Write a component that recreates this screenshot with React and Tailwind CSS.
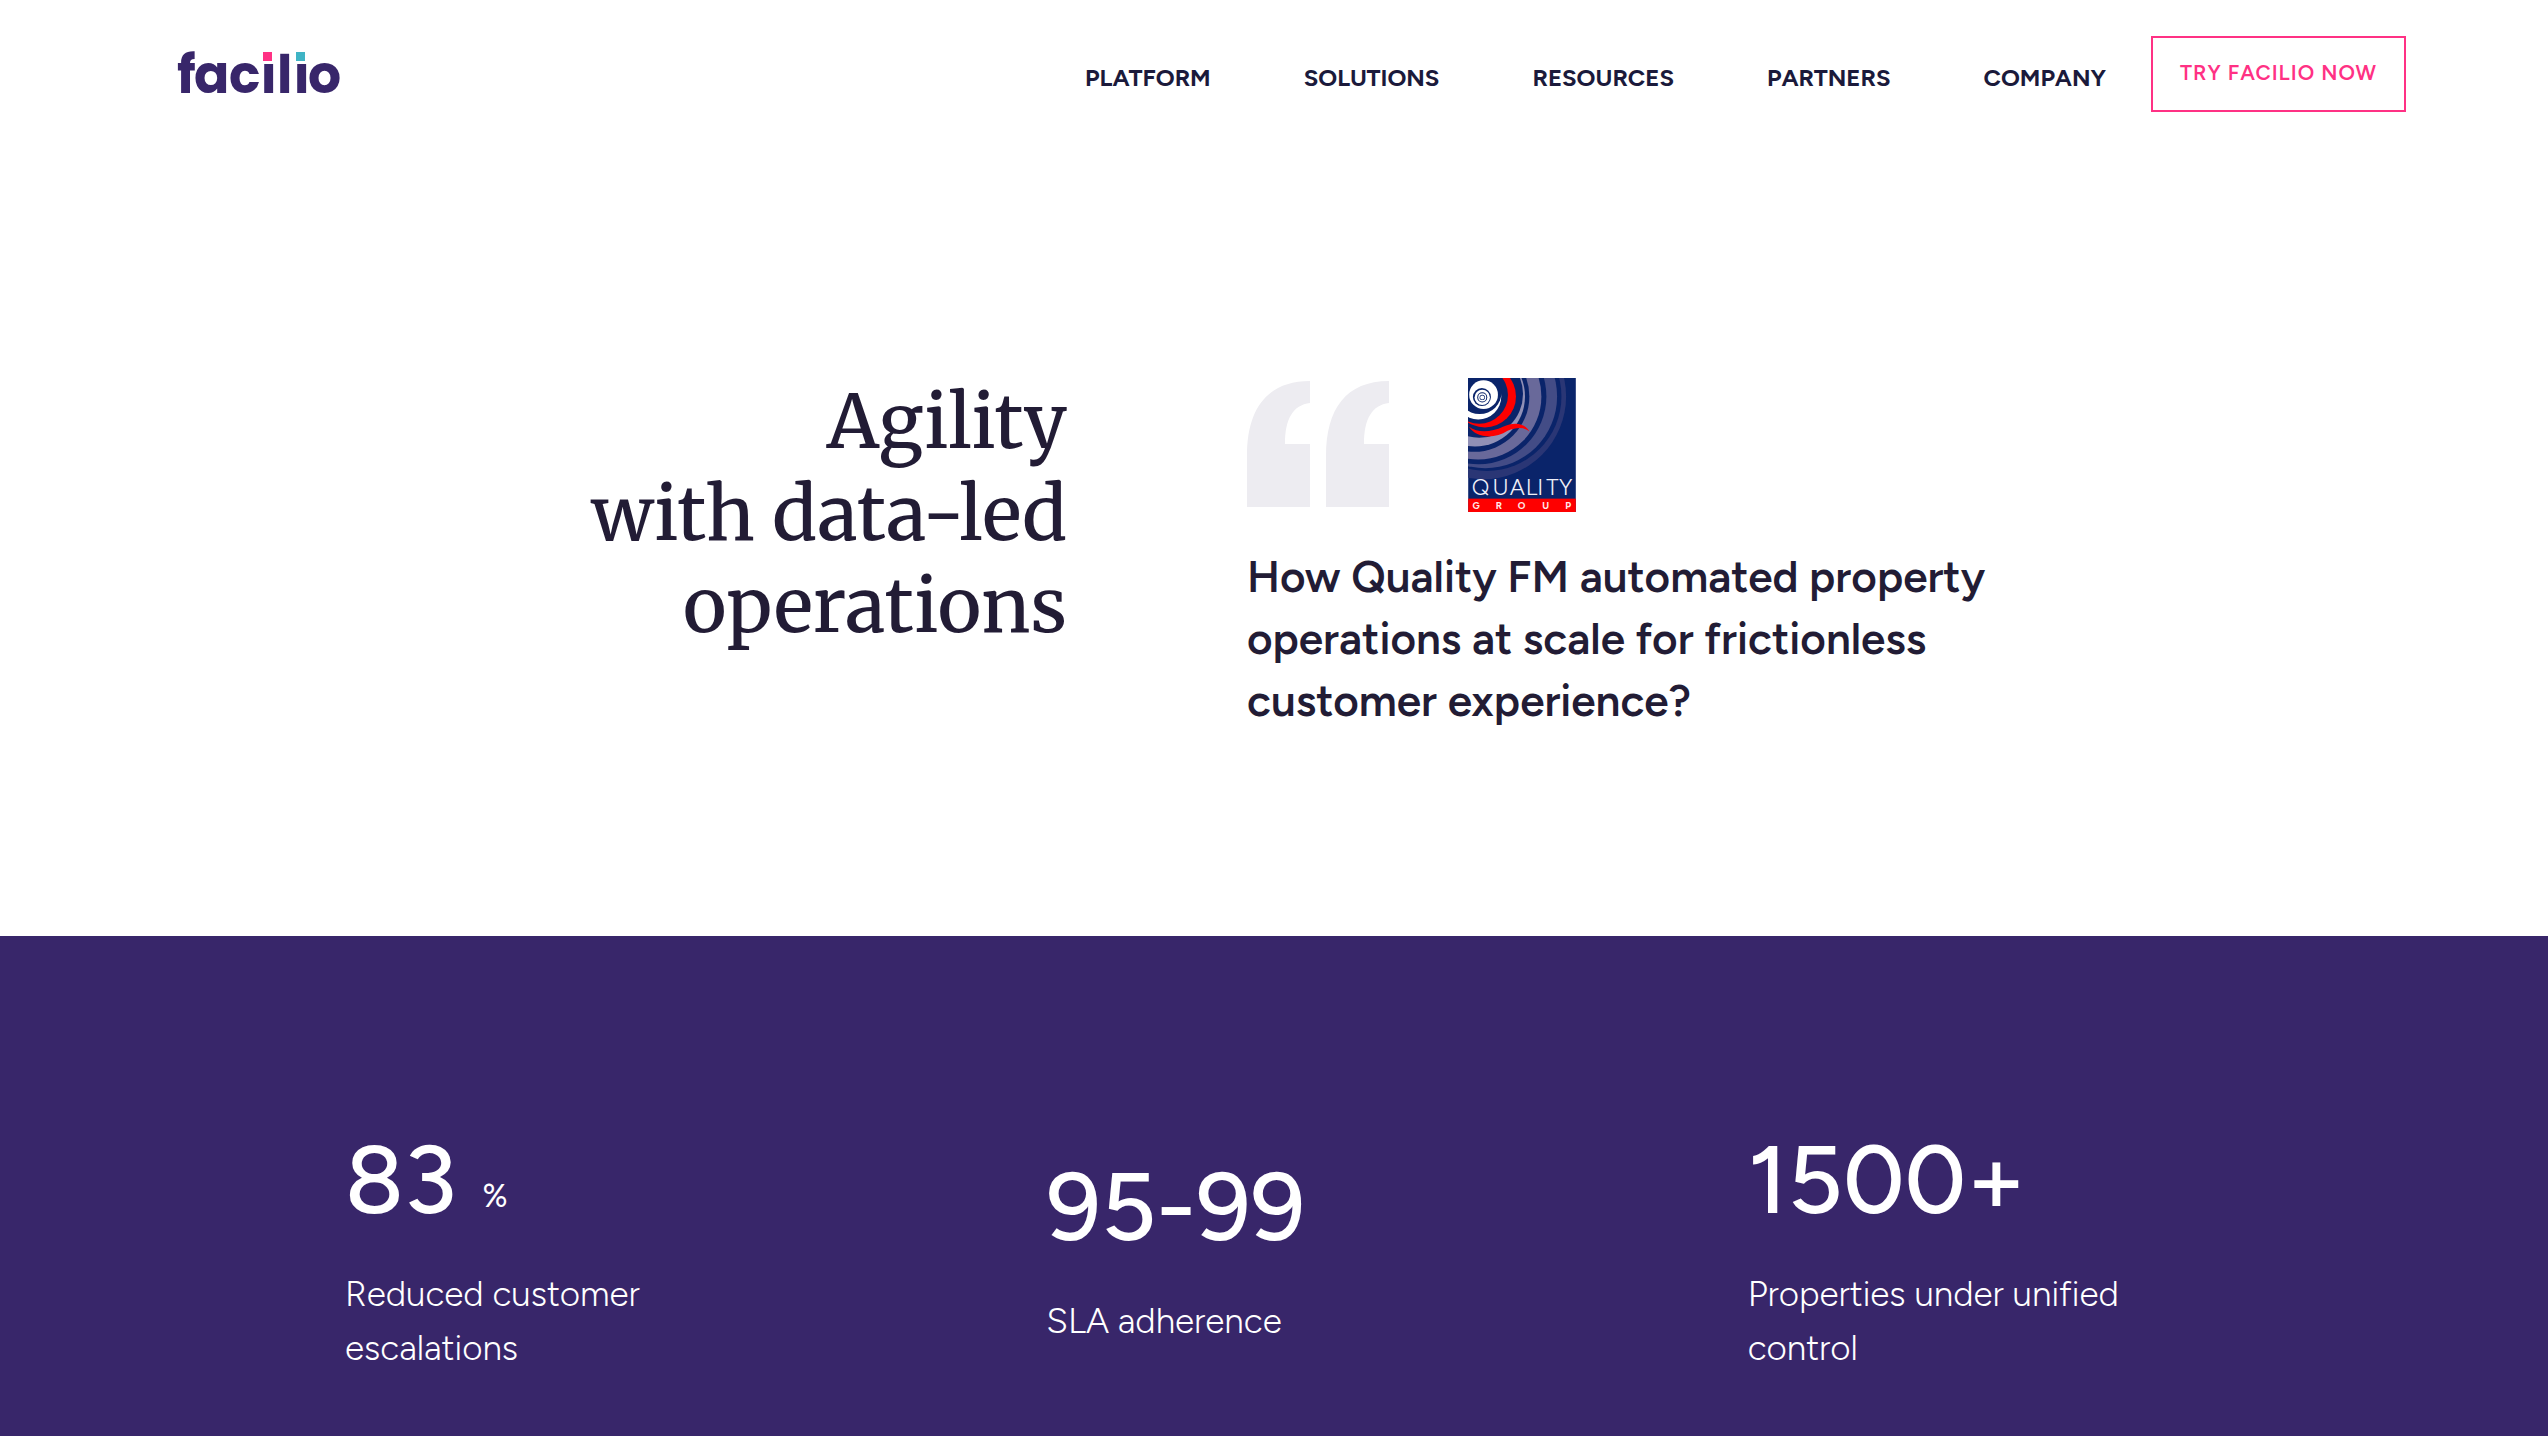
import React from "react";

const NAV = ["PLATFORM", "SOLUTIONS", "RESOURCES", "PARTNERS", "COMPANY"];

const STATS = [
  { value: "83", unit: "%", label: "Reduced customer escalations" },
  { value: "95-99", label: "SLA adherence" },
  { value: "1500+", label: "Properties under unified control" },
];

const NAVY = "#0a246a";

// Nested discs, largest first: each tinted disc is cut by a navy one to leave a crescent.
const DISCS = [
  [45, 55, 248, "#2a3675"],
  [56, 55, 223, NAVY],
  [51, 55, 215, "#434c86"],
  [31, 55, 203, NAVY],
  [30, 55, 189, "#69699a"],
  [17, 55, 166, NAVY],
  [20, 55, 150, "#9190b6"],
  [33, 48, 131, NAVY],
  [50, 55, 93, "#fe0000"],
  [33, 51, 86, NAVY],
  [30, 55, 69, "#ffffff"],
  [34, 42, 66, NAVY],
  [46, 50, 43, "#ffffff"],
  [41, 57, 27, NAVY],
  [42, 58, 23, "#ffffff"],
  [42, 58, 15, NAVY],
  [42, 58, 12, "#ffffff"],
  [42, 58, 8, NAVY],
  [42, 58, 6, "#ffffff"],
];

function FacilioLogo() {
  return (
    <svg
      viewBox="0 0 166 48"
      className="h-12 w-[166px] overflow-visible"
      role="img"
      aria-label="facilio"
    >
      <text
        x="0 17 52 84 100 117 131"
        y="43"
        fill="#38266a"
        fontSize="52"
        fontWeight="700"
        fontFamily="Poppins, Montserrat, Lato, sans-serif"
      >
        facilio
      </text>
      <rect x="84" y="0" width="13" height="14" fill="#fff" />
      <rect x="117" y="0" width="13" height="14" fill="#fff" />
      <rect x="86" y="2" width="9" height="9" fill="#ff3184" />
      <rect x="119" y="2" width="9" height="9" fill="#3fb4c5" />
    </svg>
  );
}

function QuoteMark() {
  const mark = "M63 0V22C46 24 38 38 38 63H63V126H0V75C0 28 20 0 63 0Z";
  return (
    <svg
      viewBox="0 0 142 126"
      className="mt-[3px] h-[126px] w-[142px]"
      fill="#edecf1"
      aria-hidden="true"
    >
      <path d={mark} />
      <path d={mark} transform="translate(79 0)" />
    </svg>
  );
}

function QualityLogo() {
  return (
    <svg viewBox="0 0 322 401" className="h-[134px] w-[108px]" role="img" aria-label="Quality Group">
      <rect width="322" height="401" fill={NAVY} />
      {DISCS.map(([cx, cy, r, fill], i) => (
        <circle key={i} cx={cx} cy={cy} r={r} fill={fill} />
      ))}
      <path
        d="M2 146C30 166 70 162 104 146C140 130 170 136 183 160C166 146 144 148 118 158C80 182 26 182 2 146Z"
        fill="#fe0000"
      />
      <g fontFamily="Figtree, Lato, sans-serif" textAnchor="middle">
        <text x="37 97 147 190 216 252 292" y="350" fontSize="68" fontWeight="300" fill="#f0f0f8">
          QUALITY
        </text>
        <rect y="361" width="322" height="40" fill="#fe0000" />
        <text x="24 92 160 232 299" y="391" fontSize="29" fontWeight="700" fill="#ffe9e9">
          GROUP
        </text>
      </g>
    </svg>
  );
}

export default function App() {
  return (
    <div className="flex min-h-screen flex-col bg-white font-['Figtree','Lato',sans-serif] text-[#221c35]">
      <header className="flex items-start justify-between pt-9 pr-[142px] pl-[177px]">
        <a href="#home" className="mt-3.5">
          <FacilioLogo />
        </a>
        <div className="flex items-center gap-[45px]">
          <nav className="flex gap-[93px] pt-2">
            {NAV.map((item) => (
              <a key={item} href="#menu" className="text-2xl font-bold text-[#1b1a3b]">
                {item}
              </a>
            ))}
          </nav>
          <button
            type="button"
            className="h-[76px] border-2 border-[#ff3184] px-[27px] pb-0.5 text-[21px] font-semibold tracking-[1px] text-[#ff3184]"
          >
            TRY FACILIO NOW
          </button>
        </div>
      </header>

      <main className="flex grow flex-col">
        <section className="grid min-h-[824px] grid-cols-[1067fr_1301fr] gap-x-[180px] pt-[264px]">
          <h1 className="text-right font-['Merriweather','Noto_Serif',serif] text-[74px] leading-[92px] font-medium">
            Agility
            <br />
            with data-led
            <br />
            operations
          </h1>
          <div className="pt-0.5">
            <div className="flex items-start gap-[79px]">
              <QuoteMark />
              <QualityLogo />
            </div>
            <h2 className="mt-[34px] max-w-[760px] text-[44px] leading-[62px] font-semibold">
              How Quality FM automated property operations at scale for frictionless customer
              experience?
            </h2>
          </div>
        </section>

        <section className="grow bg-[#38266a] text-white">
          <div className="mx-auto grid max-w-[2104px] grid-cols-3 items-center pt-[184px]">
            {STATS.map((s) => (
              <div key={s.label} className="pl-[123px]">
                <div className="flex items-end gap-[26px] text-[96px] leading-[120px] font-medium">
                  {s.value}
                  {s.unit && (
                    <span className="pb-5 text-[32px] leading-[48px] font-normal">{s.unit}</span>
                  )}
                </div>
                <p className="mt-[27px] max-w-[400px] text-[35px] leading-[54px] font-light">
                  {s.label}
                </p>
              </div>
            ))}
          </div>
        </section>
      </main>
    </div>
  );
}
